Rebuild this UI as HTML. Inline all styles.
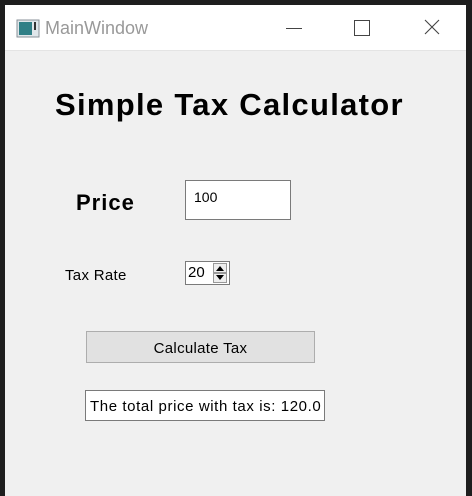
<!DOCTYPE html><html><head><style>
body{margin:0;width:472px;height:496px;background:#1e1e1e;position:relative;overflow:hidden;font-family:"Liberation Sans",sans-serif}
.win{position:absolute;left:5px;top:5px;width:461px;height:491px;background:#f0f0f0}
.tb{position:absolute;left:0;top:0;width:461px;height:45px;background:#fff;border-bottom:1px solid #e4e4e4}
.a{position:absolute;white-space:nowrap}
</style></head><body>
<div class="win">
<div class="tb">
<svg class="a" style="left:11px;top:14px" width="24" height="20"><rect x="1" y="1" width="22" height="17" fill="#dfe6ea" stroke="#8a9298"/><rect x="3" y="3" width="13" height="13" fill="#2f7f86"/><rect x="18" y="3" width="2" height="8" fill="#333"/></svg>
<div class="a" style="left:40px;top:13px;font-size:18px;color:#999">MainWindow</div>
<div class="a" style="left:281px;top:23px;width:16px;height:1px;background:#444"></div>
<div class="a" style="left:349px;top:15px;width:14px;height:14px;border:1px solid #444"></div>
<svg class="a" style="left:419px;top:14px" width="16" height="16"><path d="M1 1L15 15M15 1L1 15" stroke="#444" stroke-width="1.1"/></svg>
</div>
<div class="a" style="left:50px;top:82px;font-size:31px;font-weight:bold;color:#000;letter-spacing:1.3px">Simple Tax Calculator</div>
<div class="a" style="left:71px;top:185px;font-size:22px;font-weight:bold;letter-spacing:1px">Price</div>
<div class="a" style="left:180px;top:175px;width:104px;height:38px;background:#fff;border:1px solid #7a7a7a;font-size:14px;text-indent:4px"><span style="position:absolute;top:8px">100</span></div>
<div class="a" style="left:60px;top:262px;font-size:15px;letter-spacing:0.3px">Tax Rate</div>
<div class="a" style="left:180px;top:256px;width:43px;height:22px;background:#fff;border:1px solid #7a7a7a;font-size:15px;line-height:22px;text-indent:2px">20</div>
<svg class="a" style="left:208px;top:258px" width="14" height="20"><rect x="0.5" y="0.5" width="13" height="9" fill="#eee" stroke="#999"/><rect x="0.5" y="10.5" width="13" height="9" fill="#eee" stroke="#999"/><path d="M3 8L7 3L11 8Z M3 12L11 12L7 17Z" fill="#000"/></svg>
<div class="a" style="left:81px;top:326px;width:227px;height:30px;background:#e1e1e1;border:1px solid #adadad;font-size:15px;line-height:33px;text-align:center;letter-spacing:0.3px">Calculate Tax</div>
<div class="a" style="left:80px;top:385px;width:238px;height:29px;background:#fff;border:1px solid #7a7a7a;font-size:15px;line-height:31px;text-indent:4px;letter-spacing:0.6px">The total price with tax is: 120.0</div>
</div>
</body></html>
